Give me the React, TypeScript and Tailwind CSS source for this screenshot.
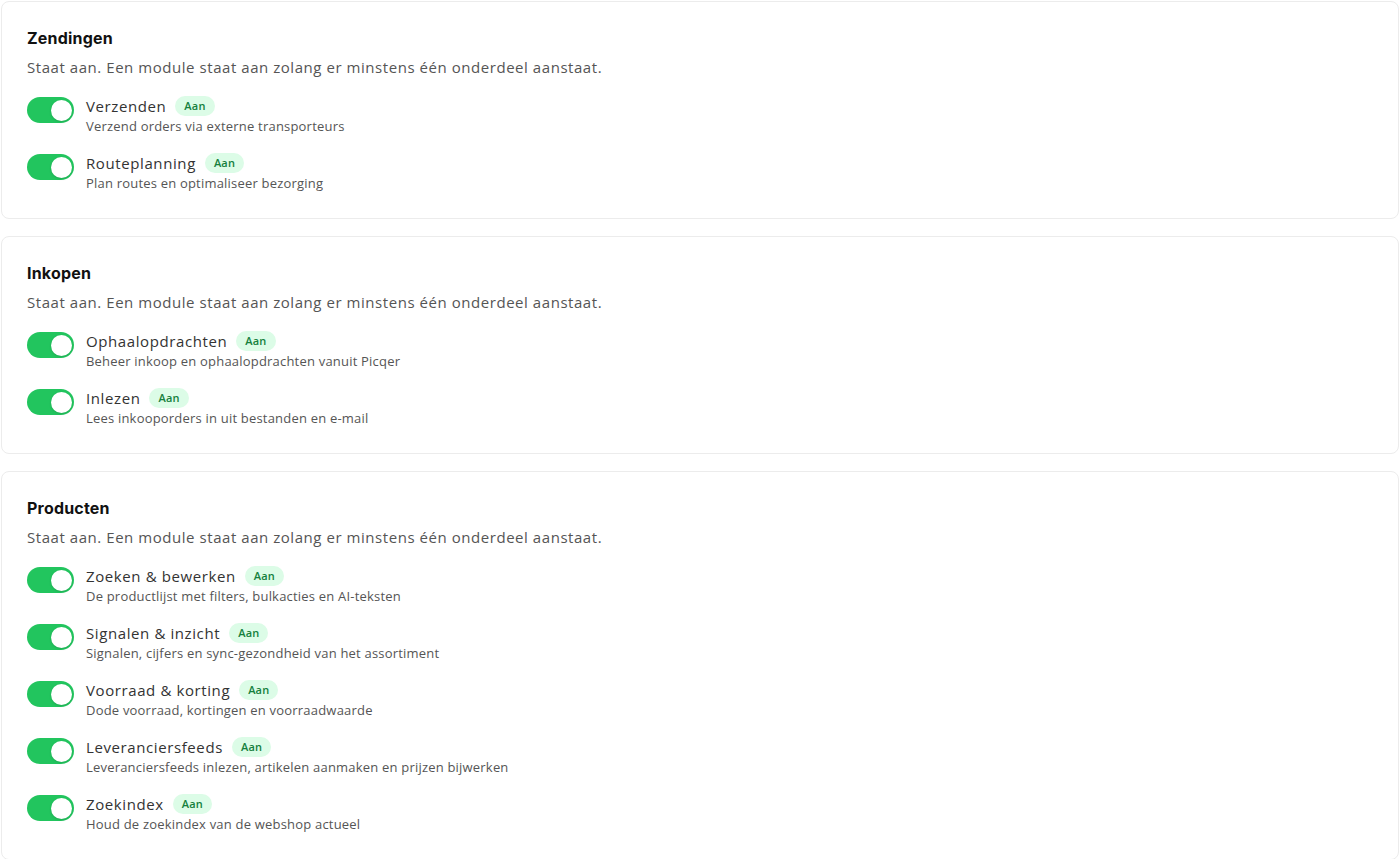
import React from "react";

type Module = { name: string; description: string };
type Section = { title: string; modules: Module[] };

const sections: Section[] = [
  {
    title: "Zendingen",
    modules: [
      { name: "Verzenden", description: "Verzend orders via externe transporteurs" },
      { name: "Routeplanning", description: "Plan routes en optimaliseer bezorging" },
    ],
  },
  {
    title: "Inkopen",
    modules: [
      { name: "Ophaalopdrachten", description: "Beheer inkoop en ophaalopdrachten vanuit Picqer" },
      { name: "Inlezen", description: "Lees inkooporders in uit bestanden en e-mail" },
    ],
  },
  {
    title: "Producten",
    modules: [
      { name: "Zoeken & bewerken", description: "De productlijst met filters, bulkacties en AI-teksten" },
      { name: "Signalen & inzicht", description: "Signalen, cijfers en sync-gezondheid van het assortiment" },
      { name: "Voorraad & korting", description: "Dode voorraad, kortingen en voorraadwaarde" },
      { name: "Leveranciersfeeds", description: "Leveranciersfeeds inlezen, artikelen aanmaken en prijzen bijwerken" },
      { name: "Zoekindex", description: "Houd de zoekindex van de webshop actueel" },
    ],
  },
];

function Toggle() {
  return (
    <div className="mt-[2px] flex h-[26px] w-[47px] shrink-0 items-center rounded-full bg-[#22c55e] px-[2px]">
      <div className="ml-auto h-[21px] w-[21px] rounded-full bg-white shadow-sm" />
    </div>
  );
}

export default function App() {
  return (
    <div className="flex flex-col gap-[17px] bg-white px-px pt-px font-['Open_Sans',sans-serif]">
      {sections.map((section) => (
        <div
          key={section.title}
          className="rounded-lg border border-[#ececec] bg-white px-[25px] pt-[24px] pb-[25px]"
        >
          <h2 className="font-['Inter',sans-serif] text-[16px] font-bold leading-6 tracking-[0.2px] text-[#111]">
            {section.title}
          </h2>
          <p className="mt-[6px] text-[15px] leading-[22px] tracking-[0.55px] text-[#555]">
            Staat aan. Een module staat aan zolang er minstens één onderdeel aanstaat.
          </p>
          <div className="mt-[17px] flex flex-col gap-[16px]">
            {section.modules.map((m) => (
              <div key={m.name} className="flex items-start gap-[12px]">
                <Toggle />
                <div className="flex flex-col">
                  <div className="flex items-center gap-[9px]">
                    <span className="text-[15px] font-medium leading-[22px] tracking-[0.6px] text-[#333]">
                      {m.name}
                    </span>
                    <span className="rounded-full bg-[#dcfce7] px-[9px] text-[11px] font-semibold leading-[20px] tracking-[0.2px] text-[#15803d]">
                      Aan
                    </span>
                  </div>
                  <span className="text-[13px] leading-[19px] tracking-[0.2px] text-[#555]">
                    {m.description}
                  </span>
                </div>
              </div>
            ))}
          </div>
        </div>
      ))}
    </div>
  );
}
